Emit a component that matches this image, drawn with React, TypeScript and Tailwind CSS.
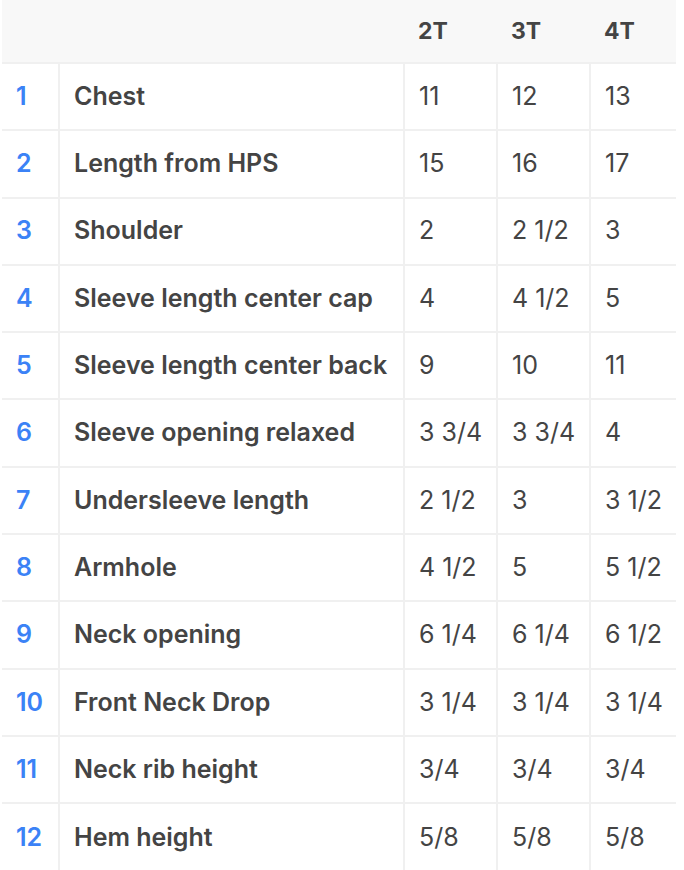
import React from 'react';

const sizes = ['2T', '3T', '4T'];

const rows = [
  { label: 'Chest', values: ['11', '12', '13'] },
  { label: 'Length from HPS', values: ['15', '16', '17'] },
  { label: 'Shoulder', values: ['2', '2 1/2', '3'] },
  { label: 'Sleeve length center cap', values: ['4', '4 1/2', '5'] },
  { label: 'Sleeve length center back', values: ['9', '10', '11'] },
  { label: 'Sleeve opening relaxed', values: ['3 3/4', '3 3/4', '4'] },
  { label: 'Undersleeve length', values: ['2 1/2', '3', '3 1/2'] },
  { label: 'Armhole', values: ['4 1/2', '5', '5 1/2'] },
  { label: 'Neck opening', values: ['6 1/4', '6 1/4', '6 1/2'] },
  { label: 'Front Neck Drop', values: ['3 1/4', '3 1/4', '3 1/4'] },
  { label: 'Neck rib height', values: ['3/4', '3/4', '3/4'] },
  { label: 'Hem height', values: ['5/8', '5/8', '5/8'] },
];

const App = () => {
  return (
    <div className="min-h-screen bg-white pl-[2px] font-['Inter',sans-serif] text-[25px] text-[#444]">
      <table className="w-[674px] table-fixed border-collapse">
        <colgroup>
          <col className="w-[57px]" />
          <col className="w-[345px]" />
          <col className="w-[93px]" />
          <col className="w-[93px]" />
          <col className="w-[86px]" />
        </colgroup>
        <thead>
          <tr className="h-[63px] bg-[#f8f8f8]">
            <th />
            <th />
            {sizes.map((s) => (
              <th key={s} className="px-[14px] pt-[1px] text-left text-[23px] font-bold">
                {s}
              </th>
            ))}
          </tr>
        </thead>
        <tbody>
          {rows.map((row, i) => (
            <tr key={row.label} className="h-[67.3px] border-t-2 border-[#f0f0f0]">
              <td className="px-[14px] font-semibold text-[#3b82f6]">{i + 1}</td>
              <td className="border-x-2 border-[#f0f0f0] px-[14px] font-semibold whitespace-nowrap">
                {row.label}
              </td>
              {row.values.map((v, j) => (
                <td
                  key={j}
                  className={`px-[14px] whitespace-nowrap ${j < 2 ? 'border-r-2 border-[#f0f0f0]' : ''}`}
                >
                  {v}
                </td>
              ))}
            </tr>
          ))}
        </tbody>
      </table>
    </div>
  );
};

export default App;
